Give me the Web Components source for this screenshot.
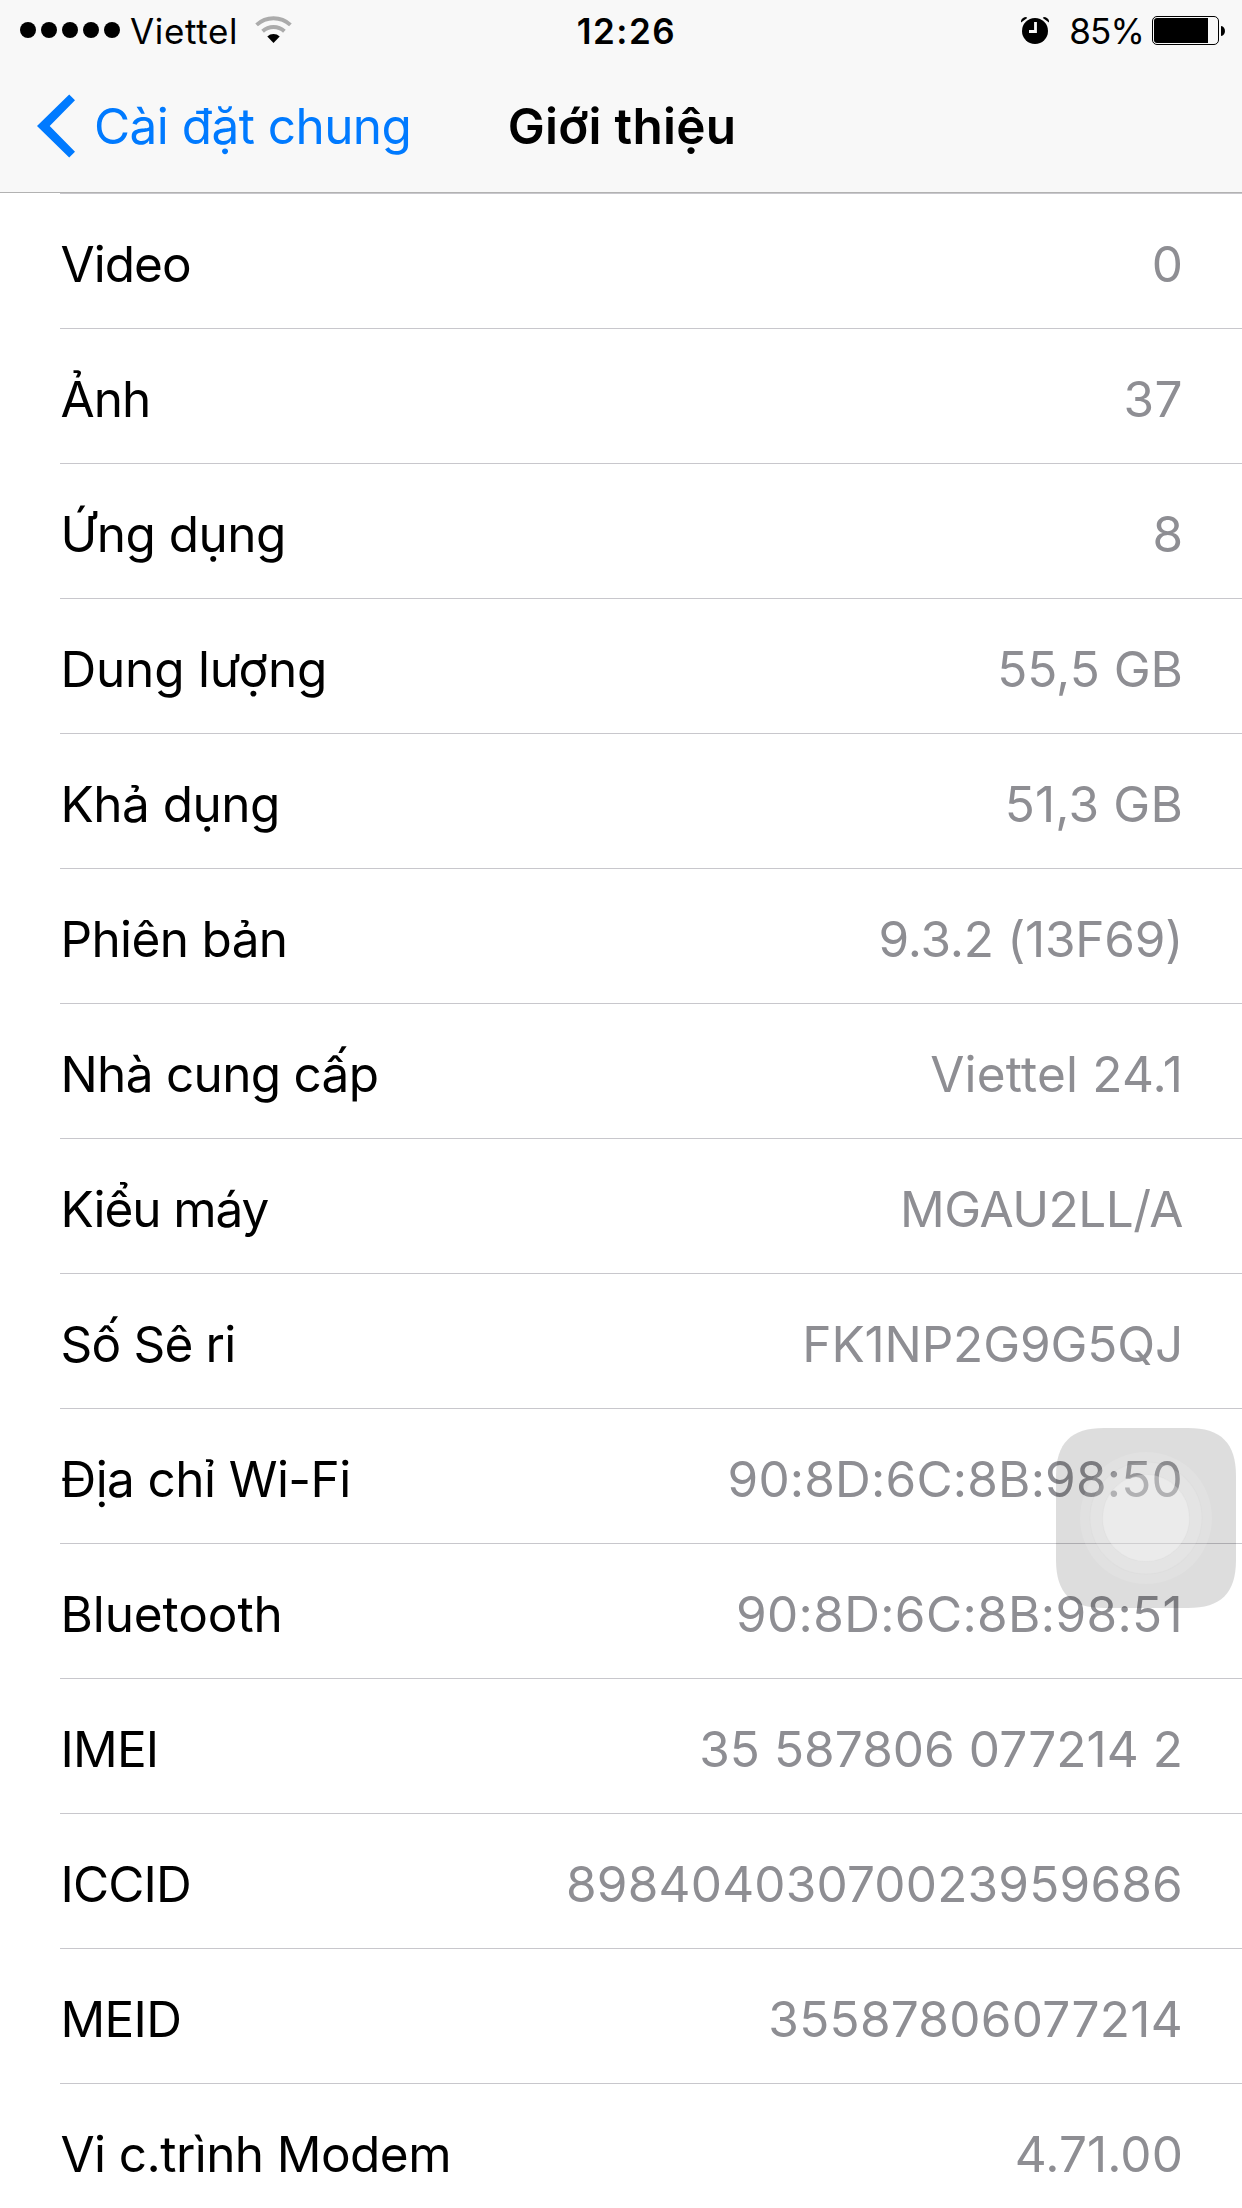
<!DOCTYPE html>
<html lang="vi">
<head>
<meta charset="utf-8">
<title>Giới thiệu</title>
<style>
    body {
        margin: 0;
        width: 1242px;
        height: 2208px;
        overflow: hidden;
        background: #fff;
        color: #000;
        font-family: Inter, "Liberation Sans", sans-serif;
    }
</style>
</head>
<body>
<about-screen></about-screen>

<script>
class StatusBar extends HTMLElement {
    constructor() {
        super();
        this.attachShadow({ mode: 'open' }).innerHTML = `
            <style>
                :host {
                    display: grid;
                    grid-template-columns: 1fr auto 1fr;
                    align-items: center;
                    height: 60px;
                    padding: 0 17px 0 20px;
                    font-size: 35px;
                    line-height: 58px;
                }
                svg { display: block; }
                .left, .right { display: flex; align-items: center; }
                .right { justify-content: flex-end; }
                .carrier, .time, .percent { padding-top: 2px; white-space: pre; }
                .carrier { margin-left: 10px; letter-spacing: 0.66px; }
                .wifi { margin-left: 17px; }
                .time { font-weight: 600; letter-spacing: 1.5px; padding-left: 8px; }
                .percent { margin: 0 8px 0 20px; letter-spacing: -0.85px; }
            </style>
            <div class="left">
                <svg width="100" height="60" viewBox="0 0 100 60">
                    <circle cx="8" cy="30" r="8"/>
                    <circle cx="29" cy="30" r="8"/>
                    <circle cx="50" cy="30" r="8"/>
                    <circle cx="71" cy="30" r="8"/>
                    <circle cx="92" cy="30" r="8"/>
                </svg>
                <span class="carrier"><slot name="carrier"></slot></span>
                <svg class="wifi" width="38" height="60" viewBox="0 0 38 60">
                    <g fill="none" stroke="#ababab" stroke-width="3.9">
                        <path d="M1.6 24.9A24.8 24.8 0 0 1 35.4 24.9"/>
                        <path d="M7.6 31.3A16 16 0 0 1 29.4 31.3"/>
                    </g>
                    <path d="M18.5 43L12.3 36.4A9.3 9.3 0 0 1 24.7 36.4Z"/>
                </svg>
            </div>
            <span class="time"><slot name="time"></slot></span>
            <div class="right">
                <svg width="28" height="60" viewBox="0 0 28 60">
                    <circle cx="14" cy="31" r="13"/>
                    <path d="M0 22.5V20.5Q1.5 17 5.2 17L6.2 18Z"/>
                    <path d="M28 22.5V20.5Q26.5 17 22.8 17L21.8 18Z"/>
                    <path d="M14.5 22V31.5H8" fill="none" stroke="#f8f8f8" stroke-width="2.8"/>
                </svg>
                <span class="percent"><slot name="percent"></slot></span>
                <svg width="73" height="60" viewBox="0 0 73 60">
                    <rect x="0.5" y="16.5" width="66" height="28" rx="4.5" fill="none" stroke="#000"/>
                    <path d="M56 18H5Q2 18 2 21V40Q2 43 5 43H56Z"/>
                    <path d="M69 26C74.3 26.5 74.3 35.5 69 36Z"/>
                </svg>
            </div>
        `;
    }
}
customElements.define('status-bar', StatusBar);

class NavBar extends HTMLElement {
    constructor() {
        super();
        this.attachShadow({ mode: 'open' }).innerHTML = `
            <style>
                :host {
                    display: grid;
                    grid-template-columns: 1fr auto 1fr;
                    align-items: center;
                    height: 132px;
                    font-size: 49.5px;
                    line-height: 60px;
                    white-space: nowrap;
                }
                .back {
                    display: flex;
                    align-items: center;
                    gap: 18px;
                    padding-left: 37px;
                    color: #007aff;
                    letter-spacing: -0.55px;
                }
                svg { display: block; fill: currentColor; }
                .title { padding-left: 2px; font-weight: 600; letter-spacing: 0.27px; }
            </style>
            <div class="back">
                <svg width="39" height="64" viewBox="0 0 39 64">
                    <path d="M32.2 0.5L38 6.3L12.7 32L38 57.7L32.2 63.5L0 32Z"/>
                </svg>
                <span><slot name="back"></slot></span>
            </div>
            <span class="title"><slot></slot></span>
        `;
    }
}
customElements.define('nav-bar', NavBar);

class InfoRow extends HTMLElement {
    constructor() {
        super();
        this.attachShadow({ mode: 'open' }).innerHTML = `
            <style>
                :host {
                    display: flex;
                    justify-content: space-between;
                    align-items: center;
                    box-sizing: border-box;
                    height: 135px;
                    padding: 6px 59px 0 0.5px;
                    border-bottom: 1px solid #c8c7cc;
                    font-size: 49.5px;
                    line-height: 60px;
                    white-space: nowrap;
                }
                .label { letter-spacing: var(--label-tracking, 0); }
                .value { letter-spacing: var(--value-tracking, 0); color: #8e8e93; }
            </style>
            <span class="label"><slot></slot></span>
            <span class="value"><slot name="value"></slot></span>
        `;
    }
}
customElements.define('info-row', InfoRow);

class AssistiveButton extends HTMLElement {
    constructor() {
        super();
        this.attachShadow({ mode: 'open' }).innerHTML = `
            <style>
                :host { display: block; width: 180px; height: 180px; }
                svg { display: block; }
            </style>
            <svg width="180" height="180" viewBox="0 0 180 180">
                <path fill="#000" fill-opacity="0.134" d="M0 48C0 15 15 0 48 0H132C165 0 180 15 180 48V132C180 165 165 180 132 180H48C15 180 0 165 0 132Z"/>
                <g fill="#fff">
                    <circle cx="90" cy="90" r="66" fill-opacity="0.12"/>
                    <circle cx="90" cy="90" r="56" fill-opacity="0.1" stroke="#000" stroke-opacity="0.012" stroke-width="1.5"/>
                    <circle cx="90" cy="90" r="43.5" fill-opacity="0.26" stroke="#000" stroke-opacity="0.015" stroke-width="1.5"/>
                </g>
            </svg>
        `;
    }
}
customElements.define('assistive-button', AssistiveButton);

// label, value, label tracking, value tracking
const ROWS = [
    ['Video', '0', -0.95, 0],
    ['Ảnh', '37', -0.9, 0.5],
    ['Ứng dụng', '8', -0.5, 0],
    ['Dung lượng', '55,5 GB', -0.2, 0],
    ['Khả dụng', '51,3 GB', -0.5, 0.2],
    ['Phiên bản', '9.3.2 (13F69)', -0.65, -0.25],
    ['Nhà cung cấp', 'Viettel 24.1', -0.7, 0.21],
    ['Kiểu máy', 'MGAU2LL/A', -1.07, -0.5],
    ['Số Sê ri', 'FK1NP2G9G5QJ', -0.8, -0.15],
    ['Địa chỉ Wi-Fi', '90:8D:6C:8B:98:50', -0.58, 0.2],
    ['Bluetooth', '90:8D:6C:8B:98:51', -0.1, 0.36],
    ['IMEI', '35 587806 077214 2', -0.8, 0.06],
    ['ICCID', '89840403070023959686', -0.85, 0.19],
    ['MEID', '35587806077214', -0.7, 0.28],
    ['Vi c.trình Modem', '4.71.00', -0.57, 0.1]
];

class AboutScreen extends HTMLElement {
    constructor() {
        super();
        this.attachShadow({ mode: 'open' }).innerHTML = `
            <style>
                :host {
                    display: block;
                    position: relative;
                    width: 1242px;
                    height: 2208px;
                    overflow: hidden;
                }
                header { background: #f8f8f8; border-bottom: 1px solid #b2b2b2; }
                main { margin-left: 60px; border-top: 1px solid #c8c7cc; }
                assistive-button { position: absolute; top: 1428px; right: 6px; }
            </style>
            <header>
                <status-bar>
                    <span slot="carrier">Viettel</span>
                    <span slot="time">12:26</span>
                    <span slot="percent">85%</span>
                </status-bar>
                <nav-bar><span slot="back">Cài đặt chung</span>Giới thiệu</nav-bar>
            </header>
            <main>
                ${ROWS.map(([label, value, lt, vt]) => `
                    <info-row style="--label-tracking: ${lt}px; --value-tracking: ${vt}px">${label}<span slot="value">${value}</span></info-row>
                `).join('')}
            </main>
            <assistive-button></assistive-button>
        `;
    }
}
customElements.define('about-screen', AboutScreen);
</script>
</body>
</html>
